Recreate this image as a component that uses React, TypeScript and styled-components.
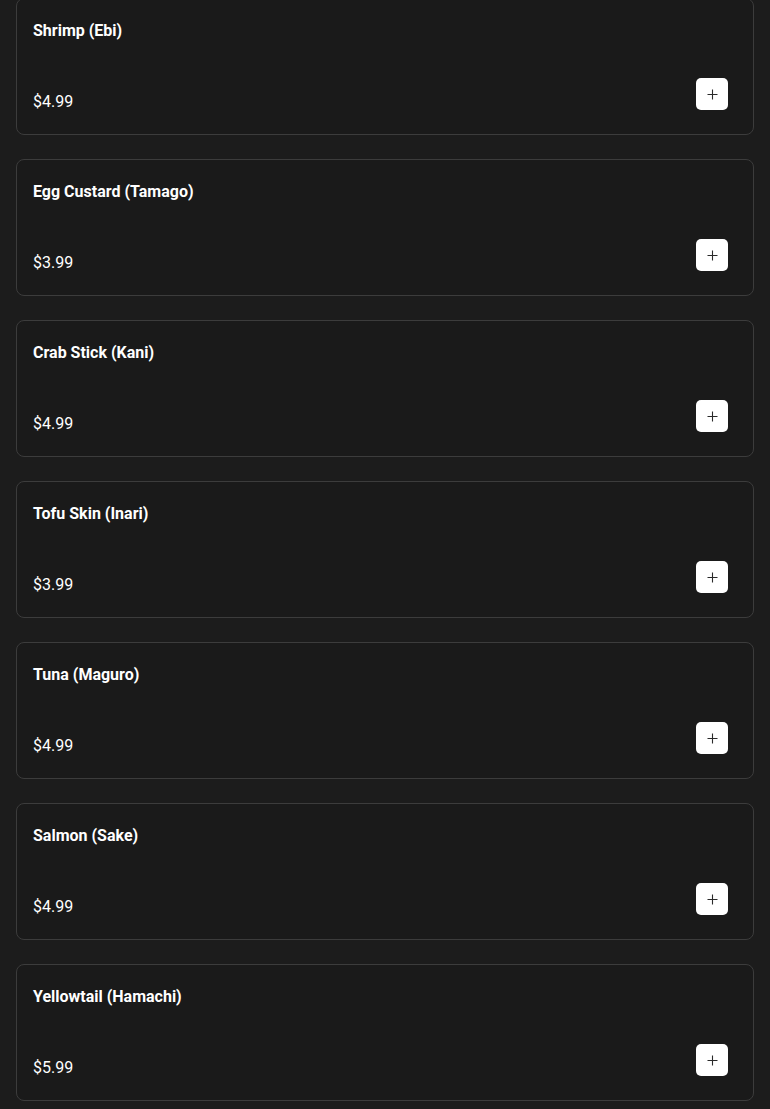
import React from "react";
import styled, { createGlobalStyle } from "styled-components";

const GlobalStyle = createGlobalStyle`
  html, body {
    margin: 0;
    padding: 0;
    background: #1c1c1c;
    font-family: Roboto, "Liberation Sans", Arial, sans-serif;
    -webkit-font-smoothing: antialiased;
  }
`;

const Page = styled.div`
  background: #1c1c1c;
  min-height: 100vh;
  padding: 0 16px 16px;
  box-sizing: border-box;
`;

const List = styled.div`
  display: flex;
  flex-direction: column;
  gap: 24px;
  margin-top: -2px;
`;

const Card = styled.div`
  display: flex;
  justify-content: space-between;
  background: #1a1a1a;
  border: 1px solid #3c3c3c;
  border-radius: 8px;
  padding: 20px 25px 20px 16px;
`;

const Info = styled.div`
  display: flex;
  flex-direction: column;
  gap: 47px;
`;

const Title = styled.h3`
  margin: 0;
  font-size: 16px;
  line-height: 24px;
  font-weight: 700;
  color: #ffffff;
`;

const Price = styled.span`
  font-size: 16px;
  line-height: 24px;
  font-weight: 400;
  color: #ffffff;
`;

const AddButton = styled.button`
  align-self: flex-end;
  margin-bottom: 4px;
  width: 32px;
  height: 32px;
  display: flex;
  align-items: center;
  justify-content: center;
  padding: 0;
  border: none;
  border-radius: 5px;
  background: #ffffff;
  color: #2a2a2a;
  cursor: pointer;
`;

const items = [
  { name: "Shrimp (Ebi)", price: "$4.99" },
  { name: "Egg Custard (Tamago)", price: "$3.99" },
  { name: "Crab Stick (Kani)", price: "$4.99" },
  { name: "Tofu Skin (Inari)", price: "$3.99" },
  { name: "Tuna (Maguro)", price: "$4.99" },
  { name: "Salmon (Sake)", price: "$4.99" },
  { name: "Yellowtail (Hamachi)", price: "$5.99" },
];

const PlusIcon = () => (
  <svg width="11" height="11" viewBox="0 0 11 11" fill="none">
    <path d="M5.5 0.5v10M0.5 5.5h10" stroke="currentColor" strokeWidth="1.1" />
  </svg>
);

export default function App() {
  return (
    <>
      <GlobalStyle />
      <Page>
        <List>
          {items.map((item) => (
            <Card key={item.name}>
              <Info>
                <Title>{item.name}</Title>
                <Price>{item.price}</Price>
              </Info>
              <AddButton aria-label={`Add ${item.name}`}>
                <PlusIcon />
              </AddButton>
            </Card>
          ))}
        </List>
      </Page>
    </>
  );
}
